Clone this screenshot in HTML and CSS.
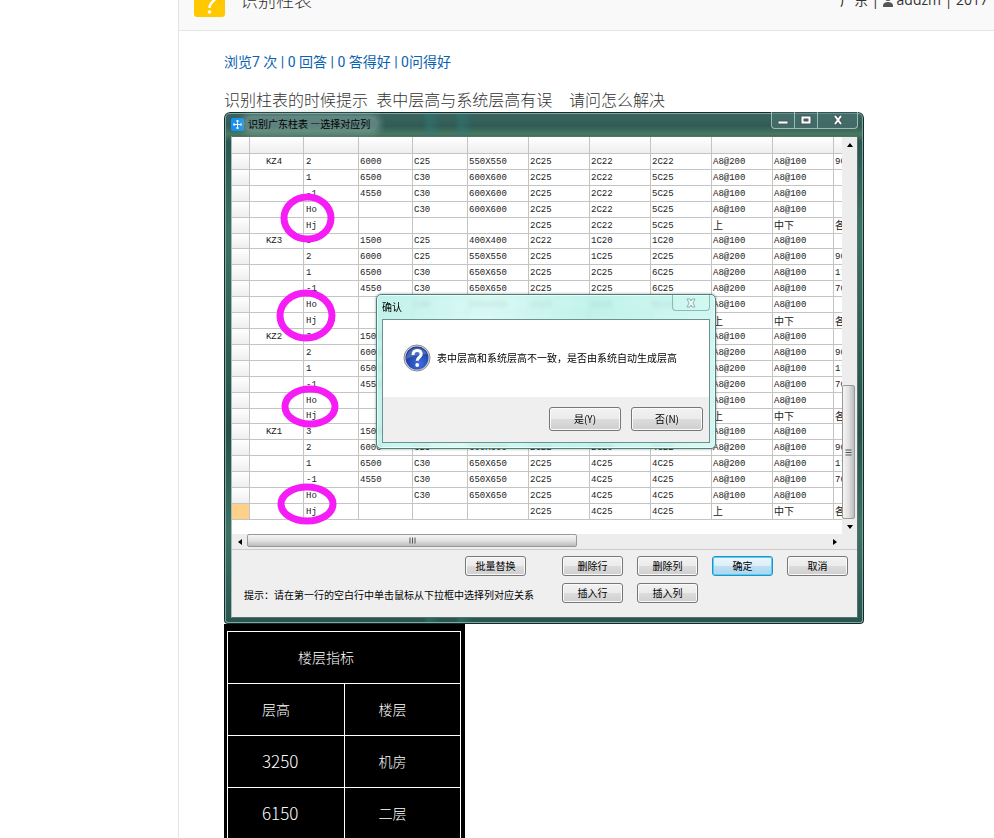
FILE: index.html
```html
<!DOCTYPE html>
<html lang="zh-CN">
<head>
  <meta charset="UTF-8">
  <title>识别柱表</title>
  <meta name="viewport" content="width=device-width, initial-scale=1">
  <link rel="stylesheet" href="styles.css">
</head>
<body>
  <main class="page">
    <header class="page-head">
      <svg class="ask-icon" viewBox="0 0 31 31" aria-hidden="true">
        <rect width="31" height="31" rx="3" fill="#ffc800"/>
        <path d="M10 11c0-4 2.500-6 6-6s6 2 6 5.500c0 5-6.500 4.500-6.500 11.500" fill="none" stroke="#fff" stroke-width="2.500"/>
        <circle cx="15.500" cy="26" r="1.800" fill="#fff"/>
      </svg>
      <h1>识别柱表</h1>
      <p class="meta">广东 | <svg viewBox="0 0 10 12" aria-hidden="true"><circle cx="5" cy="3" r="3"/><path d="M0 12V10Q1 7 5 7T10 10V12Z"/></svg> addzm | 2017</p>
    </header>

    <article class="question">
      <p class="stats"><a href="#">浏览7 次 | 0 回答 | 0 答得好 | 0问得好</a></p>
      <p class="text">识别柱表的时候提示  表中层高与系统层高有误    请问怎么解决</p>

      <section class="window">
        <div class="titlebar">
          <svg class="app-icon" viewBox="0 0 13 13" aria-hidden="true">
            <rect width="13" height="13" rx="2" fill="#1592f4"/>
            <path d="M6.500 2v9M2.500 6.500h8M5 3h3M5 10h3M3 5v3M10 5v3" stroke="#fff" fill="none"/>
          </svg>
          <h2>识别广东柱表 —选择对应列</h2>
          <div class="win-controls">
            <button type="button" aria-label="最小化"><svg viewBox="0 0 12 12"><path d="M1 7h10v3H1z" fill="#fff" stroke="#4b5c5c"/></svg></button>
            <button type="button" aria-label="最大化"><svg viewBox="0 0 12 12"><path d="M2.500 3.500h7v5h-7z" fill="none" stroke="#46585a" stroke-width="4"/><path d="M2.500 3.500h7v5h-7z" fill="none" stroke="#fff" stroke-width="2"/></svg></button>
            <button type="button" class="wide" aria-label="关闭"><svg viewBox="0 0 12 12"><path d="M3 2l6 8M9 2l-6 8" stroke="#46585a" stroke-width="4"/><path d="M3 2l6 8M9 2l-6 8" stroke="#fff" stroke-width="2"/></svg></button>
          </div>
        </div>

        <div class="client">
          <div class="sheet-area">
            <div class="sheet-view">
              <table class="sheet">
                <colgroup>
                  <col class="c-head"><col class="c-name"><col class="c-floor"><col class="c-name"><col class="c-floor"><col class="c-bar">
                  <col class="c-bar"><col class="c-bar"><col class="c-bar"><col class="c-bar"><col class="c-bar"><col class="c-bar">
                </colgroup>
                <thead>
                  <tr><th></th><th></th><th></th><th></th><th></th><th></th><th></th><th></th><th></th><th></th><th></th><th></th></tr>
                </thead>
                <tbody>
                  <tr><th></th><td>KZ4</td><td>2</td><td>6000</td><td>C25</td><td>550X550</td><td>2C25</td><td>2C22</td><td>2C22</td><td>A8@200</td><td>A8@100</td><td>900</td></tr>
                  <tr><th></th><td></td><td>1</td><td>6500</td><td>C30</td><td>600X600</td><td>2C25</td><td>2C22</td><td>5C25</td><td>A8@100</td><td>A8@100</td><td></td></tr>
                  <tr><th></th><td></td><td>-1</td><td>4550</td><td>C30</td><td>600X600</td><td>2C25</td><td>2C22</td><td>5C25</td><td>A8@100</td><td>A8@100</td><td></td></tr>
                  <tr><th></th><td></td><td>Ho</td><td></td><td>C30</td><td>600X600</td><td>2C25</td><td>2C22</td><td>5C25</td><td>A8@100</td><td>A8@100</td><td></td></tr>
                  <tr><th></th><td></td><td>Hj</td><td></td><td></td><td></td><td>2C25</td><td>2C22</td><td>5C25</td><td class="cn">上</td><td class="cn">中下</td><td class="cn">各</td></tr>
                  <tr><th></th><td>KZ3</td><td>3</td><td>1500</td><td>C25</td><td>400X400</td><td>2C22</td><td>1C20</td><td>1C20</td><td>A8@100</td><td>A8@100</td><td></td></tr>
                  <tr><th></th><td></td><td>2</td><td>6000</td><td>C25</td><td>550X550</td><td>2C25</td><td>1C25</td><td>2C25</td><td>A8@200</td><td>A8@100</td><td>900</td></tr>
                  <tr><th></th><td></td><td>1</td><td>6500</td><td>C30</td><td>650X650</td><td>2C25</td><td>2C25</td><td>6C25</td><td>A8@200</td><td>A8@100</td><td>1*</td></tr>
                  <tr><th></th><td></td><td>-1</td><td>4550</td><td>C30</td><td>650X650</td><td>2C25</td><td>2C25</td><td>6C25</td><td>A8@200</td><td>A8@100</td><td>700</td></tr>
                  <tr><th></th><td></td><td>Ho</td><td></td><td>C30</td><td>650X650</td><td>2C25</td><td>2C25</td><td>6C25</td><td>A8@100</td><td>A8@100</td><td></td></tr>
                  <tr><th></th><td></td><td>Hj</td><td></td><td></td><td></td><td></td><td></td><td></td><td class="cn">上</td><td class="cn">中下</td><td class="cn">各</td></tr>
                  <tr><th></th><td>KZ2</td><td>3</td><td>1500</td><td></td><td></td><td></td><td></td><td></td><td>A8@100</td><td>A8@100</td><td></td></tr>
                  <tr><th></th><td></td><td>2</td><td>6000</td><td></td><td></td><td></td><td></td><td></td><td>A8@200</td><td>A8@100</td><td>900</td></tr>
                  <tr><th></th><td></td><td>1</td><td>6500</td><td></td><td></td><td></td><td></td><td></td><td>A8@200</td><td>A8@100</td><td>1*</td></tr>
                  <tr><th></th><td></td><td>-1</td><td>4550</td><td></td><td></td><td></td><td></td><td></td><td>A8@200</td><td>A8@100</td><td>700</td></tr>
                  <tr><th></th><td></td><td>Ho</td><td></td><td></td><td></td><td></td><td></td><td></td><td>A8@100</td><td>A8@100</td><td></td></tr>
                  <tr><th></th><td></td><td>Hj</td><td></td><td></td><td></td><td></td><td></td><td></td><td class="cn">上</td><td class="cn">中下</td><td class="cn">各</td></tr>
                  <tr><th></th><td>KZ1</td><td>3</td><td>1500</td><td></td><td></td><td></td><td></td><td></td><td>A8@100</td><td>A8@100</td><td></td></tr>
                  <tr><th></th><td></td><td>2</td><td>6000</td><td>C25</td><td>600X600</td><td>2C22</td><td>2C20</td><td>4C22</td><td>A8@200</td><td>A8@100</td><td>900</td></tr>
                  <tr><th></th><td></td><td>1</td><td>6500</td><td>C30</td><td>650X650</td><td>2C25</td><td>4C25</td><td>4C25</td><td>A8@200</td><td>A8@100</td><td>1*</td></tr>
                  <tr><th></th><td></td><td>-1</td><td>4550</td><td>C30</td><td>650X650</td><td>2C25</td><td>4C25</td><td>4C25</td><td>A8@100</td><td>A8@100</td><td>700</td></tr>
                  <tr><th></th><td></td><td>Ho</td><td></td><td>C30</td><td>650X650</td><td>2C25</td><td>4C25</td><td>4C25</td><td>A8@100</td><td>A8@100</td><td></td></tr>
                  <tr class="current"><th></th><td></td><td>Hj</td><td></td><td></td><td></td><td>2C25</td><td>4C25</td><td>4C25</td><td class="cn">上</td><td class="cn">中下</td><td class="cn">各</td></tr>
                </tbody>
              </table>
            </div>
            <div class="vscroll">
              <button type="button" aria-label="向上"><svg viewBox="0 0 6 4"><path d="M0 4L3 0l3 4z"/></svg></button>
              <div class="thumb"><svg viewBox="0 0 6 7"><path d="M0 1h6M0 3.500h6M0 6h6" stroke="#555"/></svg></div>
              <button type="button" aria-label="向下"><svg viewBox="0 0 6 4"><path d="M0 0l3 4 3-4z"/></svg></button>
            </div>
            <div class="hscroll">
              <button type="button" aria-label="向左"><svg viewBox="0 0 4 6"><path d="M4 0L0 3l4 3z"/></svg></button>
              <div class="thumb"><svg viewBox="0 0 7 6"><path d="M1 0v6M3.500 0v6M6 0v6" stroke="#555"/></svg></div>
              <button type="button" aria-label="向右"><svg viewBox="0 0 4 6"><path d="M0 0l4 3-4 3z"/></svg></button>
            </div>
          </div>

          <div class="actions">
            <button type="button" class="btn replace">批量替换</button>
            <button type="button" class="btn">删除行</button>
            <button type="button" class="btn">删除列</button>
            <button type="button" class="btn primary">确定</button>
            <button type="button" class="btn">取消</button>
            <p class="hint">提示：请在第一行的空白行中单击鼠标从下拉框中选择列对应关系</p>
            <button type="button" class="btn insert-row">插入行</button>
            <button type="button" class="btn">插入列</button>
          </div>
        </div>

        <!-- marks around the Ho / Hj rows -->
        <svg class="marks" viewBox="0 0 640 512" aria-hidden="true">
          <ellipse cx="83.500" cy="106" rx="23.500" ry="21"/>
          <ellipse cx="82" cy="203.500" rx="26" ry="22.500"/>
          <ellipse cx="86" cy="294.500" rx="25" ry="17.500"/>
          <ellipse cx="83" cy="392" rx="26" ry="17"/>
        </svg>

        <div class="dialog" role="dialog" aria-labelledby="dialogTitle">
          <div class="dialog-title">
            <h3 id="dialogTitle">确认</h3>
            <button type="button" aria-label="关闭"><svg viewBox="0 0 12 12"><path d="M2 2h3l1 2 1-2h3L8 6l2 4H7L6 8l-1 2H2l2-4z" fill="#e9fbf8" stroke="#8fb1ae"/></svg></button>
          </div>
          <div class="dialog-body">
            <div class="message">
              <svg viewBox="0 0 28 28" aria-hidden="true">
                <defs>
                  <radialGradient id="ball" cx="60%" cy="75%" r="75%">
                    <stop offset="0" stop-color="#3e6ee0"/>
                    <stop offset="1" stop-color="#14338f"/>
                  </radialGradient>
                </defs>
                <circle cx="14" cy="14" r="13" fill="#d4d7de" stroke="#85888f"/>
                <circle cx="14" cy="14" r="11.500" fill="url(#ball)"/>
                <path d="M3 15a11 11 0 0 1 21-5Q15 10 3 15" fill="#fff" opacity=".2"/>
                <path d="M10 11c0-3 1.500-4.500 4-4.500s4.200 1.400 4.200 3.800c0 3-4 3-4 6.500" fill="none" stroke="#fff" stroke-width="3"/>
                <circle cx="14.200" cy="21" r="1.900" fill="#fff"/>
              </svg>
              <p>表中层高和系统层高不一致，是否由系统自动生成层高</p>
            </div>
            <div class="dialog-buttons">
              <button type="button" class="btn">是(Y)</button>
              <button type="button" class="btn">否(N)</button>
            </div>
          </div>
        </div>
      </section>

      <section class="cad">
        <table>
          <tr><th colspan="2" class="caption">楼层指标</th></tr>
          <tr><th>层高</th><th>楼层</th></tr>
          <tr><td class="num">3250</td><td>机房</td></tr>
          <tr><td class="num">6150</td><td>二层</td></tr>
        </table>
      </section>
    </article>
  </main>
</body>
</html>
```

FILE: styles.css
```css
* {
  box-sizing: border-box;
}
html, body {
  height: 100%;
  margin: 0;
  overflow: hidden;
}
body {
  background: #fff;
  color: #333;
  font-family: Roboto, "Noto Sans CJK SC", sans-serif;
  font-size: 14px;
}
h1, h2, h3, p {
  margin: 0;
  font-weight: normal;
}
button {
  font: inherit;
  color: inherit;
  padding: 0;
  margin: 0;
}
svg {
  display: block;
}

/* page */
.page {
  margin-left: 178px;
  min-height: 100%;
  border-left: 1px solid #e4e4e4;
}
.page-head {
  display: flex;
  align-items: flex-end;
  height: 31px;
  padding: 0 6px 13px 15px;
  background: #f9f9f9;
  border-bottom: 1px solid #e4e4e4;
}
.ask-icon {
  width: 31px;
  height: 31px;
  flex: none;
}
.page-head h1 {
  margin: 0 auto 4px 15px;
  font-size: 18px;
  font-weight: 300;
  line-height: 24px;
}
.meta {
  margin-bottom: 5px;
  font-family: "Open Sans", "Noto Sans CJK SC", sans-serif;
  line-height: 24px;
  white-space: nowrap;
}
.meta svg {
  display: inline-block;
  width: 10px;
  height: 12px;
  fill: #555;
  vertical-align: -2px;
}
.question {
  padding: 19px 0 0 45px;
}
.stats {
  line-height: 24px;
}
.stats a {
  color: #0b62b0;
  text-decoration: none;
}
.text {
  margin-top: 14px;
  font-family: "Open Sans", "Noto Sans CJK SC", sans-serif;
  font-size: 16px;
  font-weight: 300;
  line-height: 24px;
  white-space: pre;
}

/* main window */
.window {
  position: relative;
  width: 640px;
  color: #000;
  font-family: "Noto Sans CJK SC", sans-serif;
  font-size: 10px;
  padding: 0 6px 6px 7px;
  background:
    linear-gradient(90deg, transparent 31%, #2d7a7488 32%, transparent 34%, transparent 36%, #2d7a7488 37%, transparent 39%),
    linear-gradient(180deg, #3a6661 0, #315b57 14px, #477960 22px, #2a5650 30px, #3b7362 120px, #255048 320px, #3c7264 420px, #28544f 100%);
  border-radius: 6px 6px 4px 4px;
  box-shadow: inset 0 0 0 1px #122b2b, inset 0 0 0 2px #7fa79f;
}
.titlebar {
  display: flex;
  align-items: center;
  height: 24px;
}
.app-icon {
  width: 13px;
  height: 13px;
}
.titlebar h2 {
  margin-right: auto;
  padding: 0 8px 0 4px;
  font-size: 10px;
  line-height: 16px;
  border-radius: 8px;
  background: #8fada87a;
  box-shadow: 0 0 6px 3px #8fada87a;
}
.win-controls {
  display: flex;
  align-self: flex-start;
  height: 17px;
  border: 1px solid #9cbab6;
  border-top: 0;
  border-radius: 0 0 4px 4px;
  background: #4f77758c;
}
.win-controls button {
  display: flex;
  align-items: center;
  justify-content: center;
  width: 23px;
  border: 0;
  border-right: 1px solid #9cbab6;
  background: none;
}
.win-controls .wide {
  width: 39px;
  border: 0;
}
.win-controls svg {
  width: 12px;
  height: 12px;
}
.client {
  border: 1px solid #56706c;
  border-left-color: #a8bdb9;
  background: #efefef;
}

/* sheet and its scrollbars */
.sheet-area {
  display: grid;
  grid-template-columns: 1fr 15px;
  grid-template-rows: auto 15px;
  background: #fff;
  border-bottom: 1px solid #ccc;
}
.sheet-view {
  overflow: hidden;
  padding-bottom: 14px;
}
.sheet {
  width: 663px;
  height: 383px;
  table-layout: fixed;
  border-spacing: 0;
  color: #222;
  font-family: "Liberation Mono", monospace;
  font-size: 9px;
  line-height: 12px;
}
.c-head { width: 18px; }
.c-name { width: 54px; }
.c-floor { width: 55px; }
.c-bar { width: 61px; }
.sheet thead tr {
  height: 17px;
}
.sheet th, .sheet td {
  padding: 1px 0 0 1px;
  border-right: 1px solid #c4c4c4;
  border-bottom: 1px solid #c4c4c4;
  text-align: left;
  white-space: nowrap;
}
.sheet th {
  background: linear-gradient(#fff, #eee);
}
.sheet td:nth-child(2) {
  padding-right: 6px;
  text-align: center;
}
.sheet td:nth-child(3) {
  padding-left: 2px;
}
.sheet .cn {
  font-family: "Noto Sans CJK SC", sans-serif;
  font-size: 10px;
  padding-top: 0;
}
.sheet .current th {
  background: #ffd08a;
}
.vscroll, .hscroll {
  display: flex;
  background: #ededed;
}
.vscroll {
  flex-direction: column;
}
.hscroll {
  grid-column: 1 / -1;
  padding-right: 15px;
}
.vscroll button, .hscroll button {
  display: flex;
  align-items: center;
  justify-content: center;
  width: 15px;
  height: 15px;
  border: 0;
  background: none;
}
.vscroll button svg {
  width: 6px;
  height: 4px;
}
.hscroll button svg {
  width: 4px;
  height: 6px;
}
.thumb {
  display: flex;
  align-items: center;
  justify-content: center;
  border: 1px solid #999;
  border-radius: 2px;
}
.vscroll .thumb {
  width: 13px;
  height: 134px;
  margin-top: auto;
  background: linear-gradient(90deg, #f5f5f5, #e2e2e2 50%, #bcbcc0);
}
.hscroll .thumb {
  width: 330px;
  height: 13px;
  margin-right: auto;
  background: linear-gradient(#f5f5f5, #e2e2e2 50%, #bcbcc0);
}
.thumb svg {
  width: 7px;
  height: 7px;
}

/* buttons under the sheet */
.actions {
  display: grid;
  grid-template-columns: 207px 83px repeat(4, 61px);
  grid-auto-rows: 20px;
  gap: 7px 14px;
  padding: 6px 0 14px 12px;
}
.btn {
  height: 20px;
  border: 1px solid #777;
  border-radius: 3px;
  box-shadow: inset 0 0 0 1px #fafafa;
  background: linear-gradient(#f2f2f2, #ebebeb 50%, #dcdcdc 51%, #cfcfcf);
  line-height: 16px;
}
.replace {
  grid-column: 2;
  width: 61px;
}
.primary {
  border-color: #2591c4;
  box-shadow: inset 0 0 0 1px #52d0fa;
  background: linear-gradient(#eef6fb, #dceef8 50%, #bfe0f3 51%, #acd5ec);
}
.hint {
  grid-column: 1 / 3;
  line-height: 24px;
  white-space: nowrap;
}
.insert-row {
  grid-column: 3;
}
.marks {
  position: absolute;
  inset: 0;
  width: 640px;
  height: 512px;
  fill: none;
  stroke: #f51cf5;
  stroke-width: 7px;
}

/* confirm dialog */
.dialog {
  position: absolute;
  left: 152px;
  top: 182px;
  width: 340px;
  padding: 0 5px 5px;
  border: 1px solid #507e79;
  border-radius: 5px;
  background: linear-gradient(100deg, #b5efe7d9, #d3f8f3d9 30%, #b7f1e8d9 60%, #d0f8f2d9);
  backdrop-filter: blur(2px);
  box-shadow: inset 0 0 0 1px #e5fffb, 0 0 3px #0006;
}
.dialog-title {
  display: flex;
  justify-content: space-between;
  height: 24px;
}
.dialog-title h3 {
  font-size: 10px;
  line-height: 23px;
}
.dialog-title button {
  display: flex;
  align-items: center;
  justify-content: center;
  width: 38px;
  height: 16px;
  border: 1px solid #8fb9b4;
  border-top: 0;
  border-radius: 0 0 4px 4px;
  background: none;
}
.dialog-title svg {
  width: 12px;
  height: 12px;
}
.dialog-body {
  border: 1px solid #6f918d;
  background: #efefef;
}
.message {
  display: flex;
  align-items: center;
  gap: 6px;
  height: 77px;
  padding: 0 0 2px 20px;
  background: #fff;
}
.message svg {
  width: 28px;
  height: 28px;
}
.dialog-buttons {
  display: flex;
  justify-content: flex-end;
  gap: 10px;
  padding: 10px 6px 11px;
}
.dialog-buttons .btn {
  width: 72px;
  height: 24px;
}

/* CAD drawing */
.cad {
  width: 241px;
  padding: 7px 4px 7px 3px;
  background: #000;
}
.cad table {
  width: 100%;
  border-collapse: collapse;
  color: #fff;
  font-family: "Noto Sans CJK SC", sans-serif;
  font-size: 14px;
  line-height: 24px;
}
.cad th, .cad td {
  width: 50%;
  height: 52px;
  padding: 0 0 2px 34px;
  border: 1px solid #fff;
  font-weight: 300;
  text-align: left;
}
.cad .caption {
  padding-left: 70px;
}
.cad .num {
  font-size: 17px;
}
```
